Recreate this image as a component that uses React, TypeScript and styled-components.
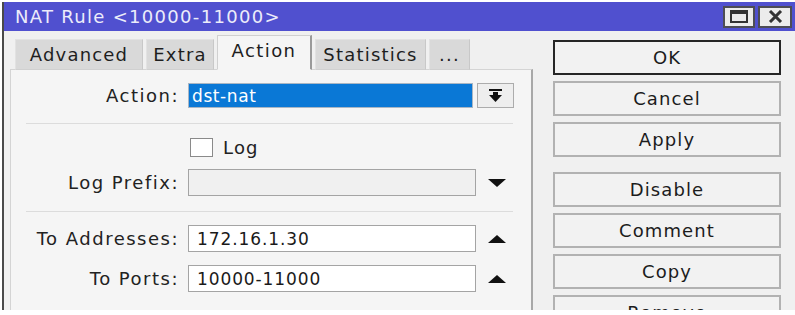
import React from "react";
import styled, { createGlobalStyle } from "styled-components";

const GlobalStyle = createGlobalStyle`
  html, body {
    margin: 0;
    background: #ffffff;
  }
  body {
    font-family: "DejaVu Sans", "Liberation Sans", sans-serif;
    color: #202020;
  }
`;

const Window = styled.div`
  margin: 2px 0 0 2px;
  width: 791px;
  height: 308px;
  border-left: 2px solid #4a4a4a;
  background: #f0f0f0;
  display: flex;
  flex-direction: column;
  overflow: hidden;
`;

const TitleBar = styled.div`
  height: 29px;
  flex-shrink: 0;
  background: #5050cf;
  display: flex;
  align-items: center;
  padding: 0 3px 0 11px;
`;

const Title = styled.span`
  color: #ececfa;
  font-size: 18px;
  letter-spacing: 1.3px;
`;

const TitleButtons = styled.div`
  margin-left: auto;
  display: flex;
  gap: 3px;
`;

const TitleButton = styled.div<{ $w: number }>`
  width: ${(p) => p.$w}px;
  height: 22px;
  box-sizing: border-box;
  background: #ececec;
  border: 2px solid #4d4d55;
  display: flex;
  align-items: center;
  justify-content: center;
`;

const Body = styled.div`
  flex: 1;
  display: flex;
`;

const LeftPane = styled.div`
  width: 523px;
  padding-left: 6px;
  display: flex;
  flex-direction: column;
`;

const TabRow = styled.div`
  display: flex;
  align-items: flex-end;
  gap: 3px;
  padding-left: 5px;
  margin-top: 4px;
  height: 35px;
  position: relative;
  z-index: 1;
  margin-bottom: -1px;
`;

const Tab = styled.div<{ $w: number; $active?: boolean }>`
  width: ${(p) => p.$w}px;
  height: ${(p) => (p.$active ? 35 : 31)}px;
  box-sizing: border-box;
  display: flex;
  align-items: center;
  justify-content: center;
  font-size: 18px;
  letter-spacing: ${(p) => (p.$active ? 1.4 : 1.2)}px;
  color: #1e1e1e;
  background: ${(p) => (p.$active ? "#f5f5f5" : "#d9d9d9")};
  border: 1px solid ${(p) => (p.$active ? "#d0d0d0" : "#e2e2e2")};
  border-right: ${(p) => (p.$active ? "2px solid #9a9a9a" : "1px solid #c8c8c8")};
  border-bottom: ${(p) => (p.$active ? "1px solid #f5f5f5" : "1px solid #d0d0d0")};
  padding-bottom: ${(p) => (p.$active ? 4 : 0)}px;
`;

const Panel = styled.div`
  flex: 1;
  background: #f5f5f5;
  border: 1px solid #d4d4d4;
  border-right: 2px solid #a8a8a8;
  padding: 13px 18px 0 15px;
  display: flex;
  flex-direction: column;
  gap: 13px;
`;

const Separator = styled.div`
  height: 1px;
  margin-top: 2px;
  background: #dcdcdc;
`;

const Row = styled.div<{ $h: number }>`
  display: grid;
  grid-template-columns: 162px 288px 38px;
  align-items: center;
  height: ${(p) => p.$h}px;
`;

const Label = styled.span`
  text-align: right;
  padding-right: 9px;
  font-size: 18px;
  letter-spacing: 1.5px;
  color: #222;
`;

const Input = styled.div<{ $disabled?: boolean }>`
  height: 100%;
  box-sizing: border-box;
  background: ${(p) => (p.$disabled ? "#f0f0f0" : "#ffffff")};
  border: 1.5px solid #a4a4a4;
  padding-left: 8px;
  display: flex;
  align-items: center;
  font-size: 17px;
  letter-spacing: 0.9px;
  color: #1a1a1a;
`;

const SelectGroup = styled.div`
  grid-column: 2 / 4;
  display: flex;
  gap: 4px;
  height: 100%;
  width: 326px;
`;

const Select = styled.div`
  flex: 1;
  box-sizing: border-box;
  background: #0a78d6;
  border: 1.5px solid #a9b6c4;
  padding-left: 3px;
  display: flex;
  align-items: center;
  font-size: 17px;
  letter-spacing: 0.6px;
  color: #ffffff;
`;

const DropButton = styled.div`
  width: 37px;
  box-sizing: border-box;
  background: #eeeeee;
  border: 1.5px solid #acacac;
  display: flex;
  align-items: center;
  justify-content: center;
`;

const CheckLine = styled.label`
  grid-column: 2 / 4;
  display: flex;
  align-items: center;
  gap: 10px;
  padding-left: 2px;
  font-size: 18px;
  letter-spacing: 1.2px;
  color: #222;
`;

const CheckBox = styled.span`
  width: 23px;
  height: 19px;
  box-sizing: border-box;
  background: #ffffff;
  border: 1.5px solid #8a8a8a;
`;

const ArrowCell = styled.div`
  display: flex;
  justify-content: center;
  padding-left: 4px;
`;

const ButtonColumn = styled.div`
  margin-left: 20px;
  width: 228px;
  padding-top: 9px;
  display: flex;
  flex-direction: column;
  gap: 5px;
`;

const Button = styled.div<{ $primary?: boolean; $spaced?: boolean }>`
  height: 35px;
  flex-shrink: 0;
  box-sizing: border-box;
  background: #f2f2f2;
  border: ${(p) => (p.$primary ? "2px solid #262626" : "2px solid #b2b2b2")};
  margin-top: ${(p) => (p.$spaced ? 10 : p.$primary ? 0 : 1)}px;
  display: flex;
  align-items: center;
  justify-content: center;
  font-size: 18px;
  letter-spacing: 1.1px;
  color: #1c1c1c;
`;

const Triangle = ({ up }: { up?: boolean }) => (
  <svg width="18" height="8" viewBox="0 0 18 8">
    <polygon points={up ? "0,8 18,8 9,0" : "0,0 18,0 9,8"} fill="#111" />
  </svg>
);

const DropIcon = () => (
  <svg width="15" height="14" viewBox="0 0 15 14">
    <rect x="1" y="0" width="13" height="2" fill="#111" />
    <rect x="5" y="3" width="5" height="4" fill="#111" />
    <polygon points="1,6 14,6 7.5,13" fill="#111" />
  </svg>
);

const MaxIcon = () => (
  <svg width="18" height="13" viewBox="0 0 18 13">
    <rect x="1" y="1" width="16" height="11" fill="none" stroke="#333" strokeWidth="2" />
    <rect x="1" y="1" width="16" height="3" fill="#333" />
  </svg>
);

const CloseIcon = () => (
  <svg width="15" height="13" viewBox="0 0 15 13">
    <path d="M2 1 L13 12 M13 1 L2 12" stroke="#333" strokeWidth="3" />
  </svg>
);

const tabs = [
  { name: "Advanced", w: 128 },
  { name: "Extra", w: 68 },
  { name: "Action", w: 95, active: true },
  { name: "Statistics", w: 111 },
  { name: "...", w: 41 },
];

const buttons = ["OK", "Cancel", "Apply", "Disable", "Comment", "Copy", "Remove"];

export default function App() {
  return (
    <>
      <GlobalStyle />
      <Window>
        <TitleBar>
          <Title>NAT Rule &lt;10000-11000&gt;</Title>
          <TitleButtons>
            <TitleButton $w={32}>
              <MaxIcon />
            </TitleButton>
            <TitleButton $w={34}>
              <CloseIcon />
            </TitleButton>
          </TitleButtons>
        </TitleBar>
        <Body>
          <LeftPane>
            <TabRow>
              {tabs.map((t) => (
                <Tab key={t.name} $w={t.w} $active={t.active}>
                  {t.name}
                </Tab>
              ))}
            </TabRow>
            <Panel>
              <Row $h={25}>
                <Label>Action:</Label>
                <SelectGroup>
                  <Select>dst-nat</Select>
                  <DropButton>
                    <DropIcon />
                  </DropButton>
                </SelectGroup>
              </Row>
              <Separator />
              <Row $h={19}>
                <span />
                <CheckLine>
                  <CheckBox />
                  Log
                </CheckLine>
              </Row>
              <Row $h={27}>
                <Label>Log Prefix:</Label>
                <Input $disabled />
                <ArrowCell>
                  <Triangle />
                </ArrowCell>
              </Row>
              <Separator />
              <Row $h={27}>
                <Label>To Addresses:</Label>
                <Input>172.16.1.30</Input>
                <ArrowCell>
                  <Triangle up />
                </ArrowCell>
              </Row>
              <Row $h={27}>
                <Label>To Ports:</Label>
                <Input>10000-11000</Input>
                <ArrowCell>
                  <Triangle up />
                </ArrowCell>
              </Row>
            </Panel>
          </LeftPane>
          <ButtonColumn>
            {buttons.map((b) => (
              <Button key={b} $primary={b === "OK"} $spaced={b === "Disable"}>
                {b}
              </Button>
            ))}
          </ButtonColumn>
        </Body>
      </Window>
    </>
  );
}
